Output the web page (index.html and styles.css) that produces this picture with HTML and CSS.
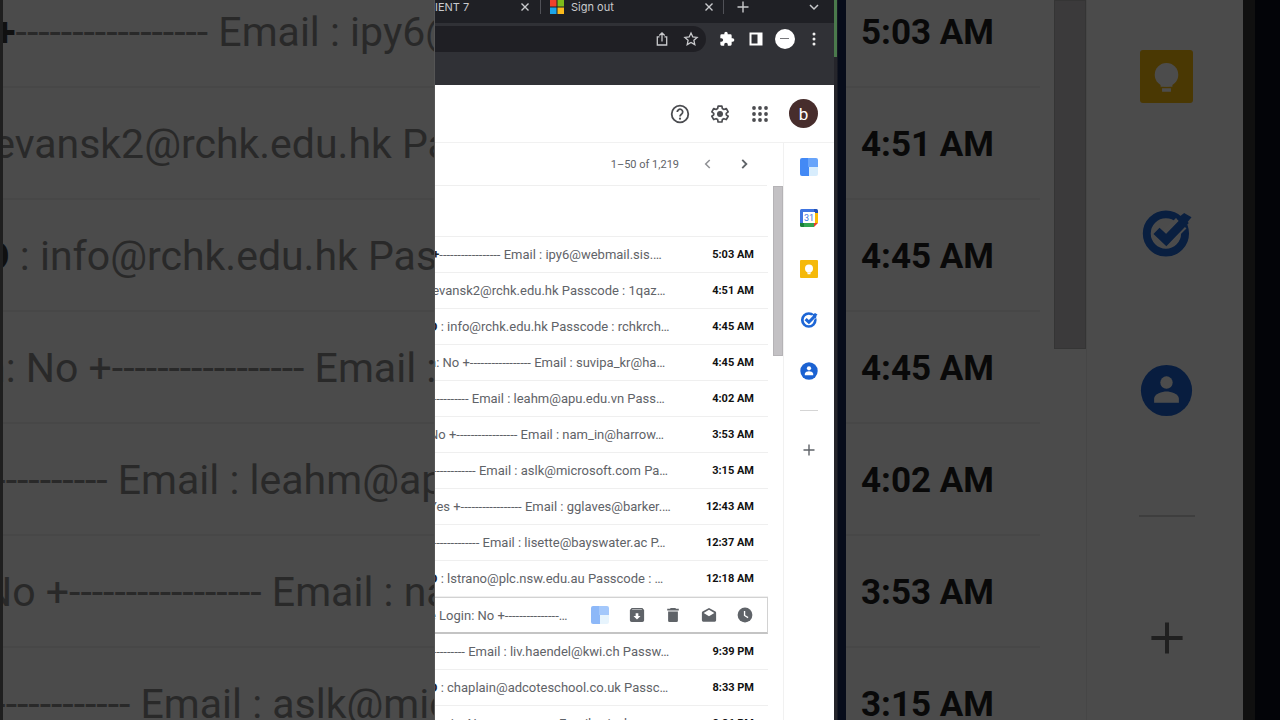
FILE: index.html
```html
<!DOCTYPE html>
<html lang="en">
<head>
    <meta charset="UTF-8">
    <meta name="viewport" content="width=device-width, initial-scale=1.0">
    <title>Inbox</title>
    <link rel="stylesheet" href="styles.css">
</head>
<body>
    <svg class="sprite" aria-hidden="true">
        <symbol id="close" viewBox="0 0 10 10"><path d="M1.5 1.5l7 7M8.5 1.5l-7 7" stroke="currentColor" stroke-width="1.4" fill="none"/></symbol>
        <symbol id="plus" viewBox="0 0 12 12"><path d="M6 .5v11M.5 6h11" stroke="currentColor" stroke-width="1.4" fill="none"/></symbol>
        <symbol id="keep" viewBox="0 0 18 18">
            <rect width="18" height="18" rx="1" fill="#f5b90a"/>
            <circle cx="9" cy="8.400" r="4" fill="#fff"/>
            <path d="M7 11.500h4v1H7zM7.500 13h3v1.200h-3z" fill="#fff"/>
        </symbol>
        <symbol id="tasks" viewBox="0 0 18 18">
            <circle cx="8.800" cy="9" r="6.500" fill="none" stroke="#1d66d6" stroke-width="2.700"/>
            <path d="M9 10.500l5-5" fill="none" stroke="#fff" stroke-width="5"/>
            <path d="M12.500 4l2.500-2 2.500 1.500-2.500 3z" fill="#1d66d6"/>
            <path d="M5.600 8.100l3.300 3.100 6.600-6.800" fill="none" stroke="#1d66d6" stroke-width="3"/>
        </symbol>
        <symbol id="contacts" viewBox="0 0 18 18">
            <circle cx="9" cy="9" r="8.700" fill="#1b62d2"/>
            <circle cx="9" cy="6.300" r="2.100" fill="#fff"/>
            <path d="M4.800 13.200v-1.400c0-1.700 2.800-2.500 4.200-2.500s4.200.8 4.200 2.500v1.400z" fill="#fff"/>
        </symbol>
        <symbol id="blocks" viewBox="0 0 18 18">
            <path d="M2 0h7v18H2a2 2 0 0 1-2-2V2a2 2 0 0 1 2-2z" fill="#4389f5"/>
            <path d="M8 0h8a2 2 0 0 1 2 2v7H8z" fill="#68a4fa"/>
            <path d="M9 9h9v7a2 2 0 0 1-2 2H9z" fill="#d8edfd"/>
        </symbol>
    </svg>

    <div class="stage">
        <div class="backdrop backdrop-left" aria-hidden="true">
            <div class="big-row"><p><b>&nbsp;+</b>----------------- Email : ipy6@webmail.sis.…</p></div>
            <div class="big-row"><p>&nbsp;evansk2@rchk.edu.hk Passcode : 1qaz…</p></div>
            <div class="big-row"><p><b>D</b> : info@rchk.edu.hk Passcode : rchkrch…</p></div>
            <div class="big-row"><p>n: No +----------------- Email : suvipa_kr@ha…</p></div>
            <div class="big-row"><p>----------- Email : leahm@apu.edu.vn Pass…</p></div>
            <div class="big-row"><p>No +----------------- Email : nam_in@harrow…</p></div>
            <div class="big-row"><p>------------- Email : aslk@microsoft.com Pa…</p></div>
        </div>

        <main class="window">
            <nav class="tabs">
                <span class="tab-title">IENT 7</span>
                <button class="tab-close" aria-label="Close tab"><svg><use href="#close"/></svg></button>
                <div class="tab">
                    <svg class="logo" viewBox="0 0 14 14"><path d="M0 0h6.500v6.500H0z" fill="#f0412c"/><path d="M7.500 0H14v6.500H7.500z" fill="#7ebb1a"/><path d="M0 7.500h6.500V14H0z" fill="#1da5e8"/><path d="M7.500 7.500H14V14H7.500z" fill="#fbba1c"/></svg>
                    <span>Sign out</span>
                    <button class="tab-close" aria-label="Close tab"><svg><use href="#close"/></svg></button>
                </div>
                <button class="tab-new" aria-label="New tab"><svg><use href="#plus"/></svg></button>
                <button class="tab-more" aria-label="Search tabs"><svg viewBox="0 0 10 10"><path d="M1 3l4 4 4-4" fill="none" stroke="currentColor" stroke-width="1.500"/></svg></button>
            </nav>
            <div class="toolbar">
                <div class="address">
                    <button aria-label="Share"><svg viewBox="0 0 16 16"><path d="M5.500 5.800H3.300v8.200h9.400V5.800h-2.200M8 10.500V2M5.300 4.500L8 1.800l2.700 2.700" fill="none" stroke="currentColor" stroke-width="1.300"/></svg></button>
                    <button aria-label="Bookmark"><svg viewBox="0 0 16 16"><path d="M8 2l1.800 4 4.300.4-3.200 2.900.9 4.300L8 11.400l-3.800 2.200.9-4.300-3.200-2.900L6.200 6z" fill="none" stroke="currentColor" stroke-width="1.300"/></svg></button>
                </div>
                <button aria-label="Extensions"><svg viewBox="0 0 24 24"><path d="M20.500 11H19V7a2 2 0 0 0-2-2h-4V3.500a2.500 2.500 0 0 0-5 0V5H4a2 2 0 0 0-2 2v3.800h1.500a2.700 2.700 0 0 1 0 5.400H2V20a2 2 0 0 0 2 2h3.800v-1.500a2.700 2.700 0 0 1 5.400 0V22H17a2 2 0 0 0 2-2v-4h1.500a2.500 2.500 0 0 0 0-5z" fill="#fff"/></svg></button>
                <button aria-label="Side panel"><svg viewBox="0 0 16 16"><path d="M1.500 1.500h13v13h-13zM3.500 3.500v9h6v-9z" fill="#fff" fill-rule="evenodd"/></svg></button>
                <button class="profile" aria-label="Profile"><svg viewBox="0 0 20 20"><circle cx="10" cy="10" r="10" fill="#fff"/><path d="M5 9.500h9" stroke="#77777b"/></svg></button>
                <button aria-label="Menu"><svg viewBox="0 0 16 16"><g fill="#eee"><circle cx="8" cy="3" r="1.500"/><circle cx="8" cy="8" r="1.500"/><circle cx="8" cy="13" r="1.500"/></g></svg></button>
            </div>

            <header class="mail-header">
                <button aria-label="Support"><svg viewBox="0 0 20 20"><circle cx="10" cy="10" r="8.300" fill="none" stroke="currentColor" stroke-width="1.800"/><path d="M7.300 8a2.700 2.700 0 1 1 4.300 2.100C10.600 10.900 10 11.300 10 12.500" fill="none" stroke="currentColor" stroke-width="1.800"/><circle cx="10" cy="14.700" r="1.100" fill="currentColor"/></svg></button>
                <button aria-label="Settings"><svg viewBox="0 0 24 24"><path d="M9.700 2.500h4.600l.5 2.900 1.900 1.100 2.800-1.100 2.300 4-2.300 1.800v1.700l2.300 1.800-2.300 4-2.800-1.100-1.900 1.100-.5 2.900H9.700l-.5-2.900-1.900-1.100-2.800 1.100-2.300-4 2.300-1.800v-1.700L2.200 9.400l2.300-4 2.800 1.100 1.900-1.100z" fill="none" stroke="currentColor" stroke-width="2" stroke-linejoin="round"/><circle cx="12" cy="12" r="3.600" fill="currentColor"/></svg></button>
                <button aria-label="Google apps"><svg viewBox="0 0 20 20"><g fill="currentColor"><circle cx="4" cy="4" r="1.900"/><circle cx="10" cy="4" r="1.900"/><circle cx="16" cy="4" r="1.900"/><circle cx="4" cy="10" r="1.900"/><circle cx="10" cy="10" r="1.900"/><circle cx="16" cy="10" r="1.900"/><circle cx="4" cy="16" r="1.900"/><circle cx="10" cy="16" r="1.900"/><circle cx="16" cy="16" r="1.900"/></g></svg></button>
                <button class="avatar">b</button>
            </header>

            <div class="mail-body">
                <section class="inbox">
                    <div class="pager">
                        <span>1–50 of 1,219</span>
                        <button class="newer" aria-label="Newer"><svg viewBox="0 0 12 12"><path d="M7.500 2.500L4 6l3.500 3.500" fill="none" stroke="currentColor" stroke-width="1.300"/></svg></button>
                        <button aria-label="Older"><svg viewBox="0 0 12 12"><path d="M4.500 2.500L8 6 4.500 9.500" fill="none" stroke="currentColor" stroke-width="1.600"/></svg></button>
                    </div>
                    <div class="scroll-area">
                        <table class="messages">
                            <colgroup>
                                <col>
                                <col class="time-col">
                            </colgroup>
                            <tr class="spacer"><td colspan="2"></td></tr>
                            <tr><td class="snippet"><p><b>&nbsp;+</b>----------------- Email : ipy6@webmail.sis.…</p></td><td class="time">5:03 AM</td></tr>
                            <tr><td class="snippet"><p>&nbsp;evansk2@rchk.edu.hk Passcode : 1qaz…</p></td><td class="time">4:51 AM</td></tr>
                            <tr><td class="snippet"><p><b>D</b> : info@rchk.edu.hk Passcode : rchkrch…</p></td><td class="time">4:45 AM</td></tr>
                            <tr><td class="snippet"><p>n: No +----------------- Email : suvipa_kr@ha…</p></td><td class="time">4:45 AM</td></tr>
                            <tr><td class="snippet"><p>----------- Email : leahm@apu.edu.vn Pass…</p></td><td class="time">4:02 AM</td></tr>
                            <tr><td class="snippet"><p>No +----------------- Email : nam_in@harrow…</p></td><td class="time">3:53 AM</td></tr>
                            <tr><td class="snippet"><p>------------- Email : aslk@microsoft.com Pa…</p></td><td class="time">3:15 AM</td></tr>
                            <tr><td class="snippet"><p>Yes +----------------- Email : gglaves@barker.…</p></td><td class="time">12:43 AM</td></tr>
                            <tr><td class="snippet"><p>-------------- Email : lisette@bayswater.ac P…</p></td><td class="time">12:37 AM</td></tr>
                            <tr><td class="snippet"><p><b>D</b> : lstrano@plc.nsw.edu.au Passcode : …</p></td><td class="time">12:18 AM</td></tr>
                            <tr class="active">
                                <td class="snippet" colspan="2">
                                    <div class="row-actions">
                                        <p>e Login: No +---------------…</p>
                                        <button class="faded" aria-label="Add-on"><svg><use href="#blocks"/></svg></button>
                                        <button aria-label="Archive"><svg viewBox="0 0 18 18"><path d="M3 1h12l2 2.500V15a2 2 0 0 1-2 2H3a2 2 0 0 1-2-2V3.500zM3.500 2.700h11v.6h-11zM7.500 7v3H5l4 4 4-4h-2.500V7z" fill="currentColor" fill-rule="evenodd"/></svg></button>
                                        <button aria-label="Delete"><svg viewBox="0 0 18 18"><path d="M3.500 5h11v10.500a1.500 1.500 0 0 1-1.500 1.500H5a1.500 1.500 0 0 1-1.500-1.500zM6.500 1h5l1 1H15.500v2h-13V2h3z" fill="currentColor"/></svg></button>
                                        <button aria-label="Mark as read"><svg viewBox="0 0 18 18"><path d="M9 1l7.300 4.200c.5.300.7.700.7 1.300V15a1.500 1.500 0 0 1-1.500 1.500h-13A1.500 1.500 0 0 1 1 15V6.500c0-.6.200-1 .7-1.300zM9 3L3 6.700l6 3.800 6-3.800z" fill="currentColor" fill-rule="evenodd"/></svg></button>
                                        <button aria-label="Snooze"><svg viewBox="0 0 18 18"><circle cx="9" cy="9" r="8.300" fill="currentColor"/><path d="M8.500 4.500v5l4 2.500" fill="none" stroke="#fff" stroke-width="1.500"/></svg></button>
                                    </div>
                                </td>
                            </tr>
                            <tr><td class="snippet"><p>---------- Email : liv.haendel@kwi.ch Passw…</p></td><td class="time">9:39 PM</td></tr>
                            <tr><td class="snippet"><p><b>D</b> : chaplain@adcoteschool.co.uk Passc…</p></td><td class="time">8:33 PM</td></tr>
                            <tr><td class="snippet"><p>Login: No +----------------- Email : sivakor…</p></td><td class="time">8:26 PM</td></tr>
                        </table>
                        <div class="track"><div class="thumb"></div></div>
                    </div>
                </section>
                <aside class="side-panel">
                    <button aria-label="Add-on"><svg><use href="#blocks"/></svg></button>
                    <button aria-label="Calendar"><svg viewBox="0 0 18 18"><path d="M1.500 0H14v4H4v10H0V1.500A1.500 1.500 0 0 1 1.500 0z" fill="#3f74e0"/><path d="M14 0h2.500A1.500 1.500 0 0 1 18 1.500V4h-4z" fill="#2352b5"/><path d="M14 4h4v10h-4z" fill="#fbbc05"/><path d="M4 14h10v4H4z" fill="#33a551"/><path d="M0 14h4v4H1.500A1.500 1.500 0 0 1 0 16.500z" fill="#188038"/><path d="M14 14h4l-4 4z" fill="#e5412d"/><path d="M3 3h12v11H3z" fill="#fff"/><text x="9" y="12" class="calendar-day">31</text></svg></button>
                    <button aria-label="Keep"><svg><use href="#keep"/></svg></button>
                    <button aria-label="Tasks"><svg><use href="#tasks"/></svg></button>
                    <button aria-label="Contacts"><svg><use href="#contacts"/></svg></button>
                    <hr>
                    <button class="add" aria-label="Get add-ons"><svg><use href="#plus"/></svg></button>
                </aside>
            </div>
        </main>

        <div class="desktop-edge"></div>

        <div class="backdrop backdrop-right" aria-hidden="true">
            <div class="big-times">
                <div class="big-row">5:03 AM</div>
                <div class="big-row">4:51 AM</div>
                <div class="big-row">4:45 AM</div>
                <div class="big-row">4:45 AM</div>
                <div class="big-row">4:02 AM</div>
                <div class="big-row">3:53 AM</div>
                <div class="big-row">3:15 AM</div>
            </div>
            <div class="big-track"></div>
            <div class="big-panel">
                <svg><use href="#keep"/></svg>
                <svg><use href="#tasks"/></svg>
                <svg><use href="#contacts"/></svg>
                <hr>
                <svg class="big-plus"><use href="#plus"/></svg>
            </div>
            <div class="big-edge"></div>
        </div>
    </div>
</body>
</html>
```
FILE: styles.css
```css
* {
    box-sizing: border-box;
}
body {
    margin: 0;
    font-family: Roboto, "Liberation Sans", sans-serif;
    background-color: #000;
    color: #5f6368;
}
p {
    margin: 0;
    white-space: nowrap;
}
button {
    display: flex;
    align-items: center;
    justify-content: center;
    flex: none;
    padding: 0;
    border: none;
    background: none;
    color: inherit;
    font-family: inherit;
}
button svg {
    display: block;
    width: 100%;
    height: 100%;
}
.sprite {
    display: none;
}
.stage {
    display: grid;
    grid-template-columns: 1fr 400px 12px 1fr;
    height: 100vh;
    overflow: hidden;
}

/* enlarged, dimmed copy of the inbox on both sides */
.backdrop {
    background-color: #4b4b4b;
    overflow: hidden;
    min-width: 0;
}
.backdrop-left {
    border-left: 3px solid #1f1f1f;
    font-size: 41px;
    color: #292929;
}
.big-row {
    height: 112px;
    display: flex;
    align-items: center;
    padding-top: 2px;
    border-bottom: 2px solid #474747;
}
.big-row:first-child {
    margin-top: -24px;
}
.big-row p {
    margin-left: -20px;
}
.big-row b {
    color: #101010;
}
.backdrop-right {
    display: flex;
}
.big-times {
    flex: 1;
    margin-right: 14px;
    font-size: 35px;
    font-weight: bold;
    color: #090909;
}
.big-times .big-row {
    justify-content: flex-end;
    padding-right: 46px;
}
.big-track {
    width: 32px;
    height: 349px;
    background-color: #3b3a3b;
    border: 1px solid #353535;
}
.big-panel {
    width: 157px;
    border-left: 1px solid #464646;
    display: flex;
    flex-direction: column;
    align-items: center;
    padding: 50px 0 0 3px;
    gap: 104px;
    color: #202020;
}
.big-panel svg {
    flex: none;
    width: 53px;
    height: 53px;
    filter: brightness(0.3);
}
.big-panel hr {
    width: 56px;
    margin: -6px 0 0;
    border: none;
    border-top: 2px solid #3e3e3e;
}
.big-panel .big-plus {
    width: 34px;
    height: 34px;
    filter: none;
}
.big-edge {
    width: 37px;
    background-color: #030408;
    border-left: 12px solid #101010;
}

/* browser window */
.window {
    display: flex;
    flex-direction: column;
    min-width: 0;
    overflow: hidden;
    border-left: 1px solid #555;
    background-color: #fff;
}
.tabs {
    flex: none;
    display: flex;
    align-items: center;
    height: 23px;
    padding-bottom: 9px;
    background-color: #1f2025;
    color: #c9cacd;
    font-family: Inter, Roboto, sans-serif;
    font-size: 11px;
}
.tab-title {
    flex: 1;
}
.tab-close {
    width: 10px;
    height: 10px;
    margin-right: 10px;
}
.tab {
    display: flex;
    align-items: center;
    gap: 7px;
    width: 184px;
    padding-left: 9px;
    border-left: 1px solid #505157;
    border-right: 1px solid #505157;
}
.tab span {
    flex: 1;
}
.tab .tab-close {
    margin-right: 9px;
}
.logo {
    width: 14px;
    height: 14px;
}
.tab-new {
    width: 12px;
    height: 12px;
    margin: 0 60px 0 13px;
}
.tab-more {
    width: 10px;
    height: 10px;
    margin-right: 15px;
}
.toolbar {
    flex: none;
    display: flex;
    align-items: center;
    gap: 13px;
    height: 62px;
    padding: 3px 12px 33px 0;
    background-color: #303136;
    color: #c9cacd;
}
.toolbar button {
    width: 16px;
    height: 16px;
}
.address {
    flex: 1;
    display: flex;
    align-items: center;
    justify-content: flex-end;
    gap: 13px;
    height: 26px;
    padding-right: 7px;
    background-color: #1f1f24;
    border-radius: 0 13px 13px 0;
}
.toolbar .profile {
    width: 20px;
    height: 20px;
    margin: 0 -2px;
}

/* mail */
.mail-header {
    flex: none;
    display: flex;
    align-items: center;
    justify-content: flex-end;
    gap: 20px;
    height: 58px;
    padding-right: 16px;
    border-bottom: 1px solid #f1f1f1;
    color: #4b4c50;
}
.mail-header button {
    width: 20px;
    height: 20px;
}
.mail-header .avatar {
    width: 29px;
    height: 29px;
    margin-left: -1px;
    border-radius: 50%;
    background-color: #472d2c;
    color: #fff;
    font-size: 17px;
}
.mail-body {
    flex: 1;
    display: flex;
    min-height: 0;
}
.inbox {
    flex: 1;
    display: flex;
    flex-direction: column;
    min-width: 0;
}
.pager {
    flex: none;
    display: flex;
    align-items: center;
    justify-content: flex-end;
    gap: 22px;
    height: 43px;
    margin-right: 16px;
    padding-right: 16px;
    border-bottom: 1px solid #efefef;
    font-size: 11px;
}
.pager button {
    width: 14px;
    height: 14px;
}
.pager .newer {
    color: #8f9195;
}
.scroll-area {
    flex: 1;
    display: flex;
    min-height: 0;
}
.messages {
    flex: 1;
    table-layout: fixed;
    border-spacing: 0;
    align-self: flex-start;
    width: 0;
    margin-right: 5px;
}
.time-col {
    width: 86px;
}
.messages td {
    height: 36px;
    padding: 0;
    border-bottom: 1px solid #efefef;
}
.messages .spacer td {
    height: 51px;
}
.snippet {
    overflow: hidden;
    font-size: 13px;
}
.snippet p {
    margin-left: -6px;
}
.snippet b {
    color: #202124;
}
.messages .time {
    padding-right: 14px;
    text-align: right;
    font-size: 11px;
    font-weight: bold;
    color: #111;
}
.messages .active td {
    height: 37px;
    border: 1px solid #d2d2d2;
    border-left: none;
    border-bottom: 2px solid #c4c4c4;
}
.row-actions {
    display: flex;
    align-items: center;
    gap: 20px;
    padding-right: 14px;
}
.row-actions p {
    flex: 1;
}
.row-actions button {
    width: 16px;
    height: 16px;
}
.row-actions .faded {
    width: 18px;
    height: 18px;
    opacity: 0.6;
}
.track {
    width: 10px;
}
.thumb {
    height: 170px;
    background-color: #c3c1c4;
    border: 1px solid #b5b3b6;
}
.side-panel {
    flex: none;
    display: flex;
    flex-direction: column;
    align-items: center;
    gap: 33px;
    width: 51px;
    padding-top: 15px;
    border-left: 1px solid #f1f1f1;
}
.side-panel button {
    width: 18px;
    height: 18px;
}
.side-panel hr {
    width: 18px;
    margin: -3px 0 0;
    border: none;
    border-top: 1px solid #d5d5d5;
}
.side-panel .add {
    width: 12px;
    height: 12px;
}
.calendar-day {
    font-size: 9px;
    text-anchor: middle;
    fill: #3f74e0;
}

/* strip of desktop seen past the window */
.desktop-edge {
    background: linear-gradient(#4a7a4c, #4a7a4c) 0 0 / 3px 57px no-repeat, linear-gradient(90deg, #25252b 3px, #070c1a 4px);
}
```
